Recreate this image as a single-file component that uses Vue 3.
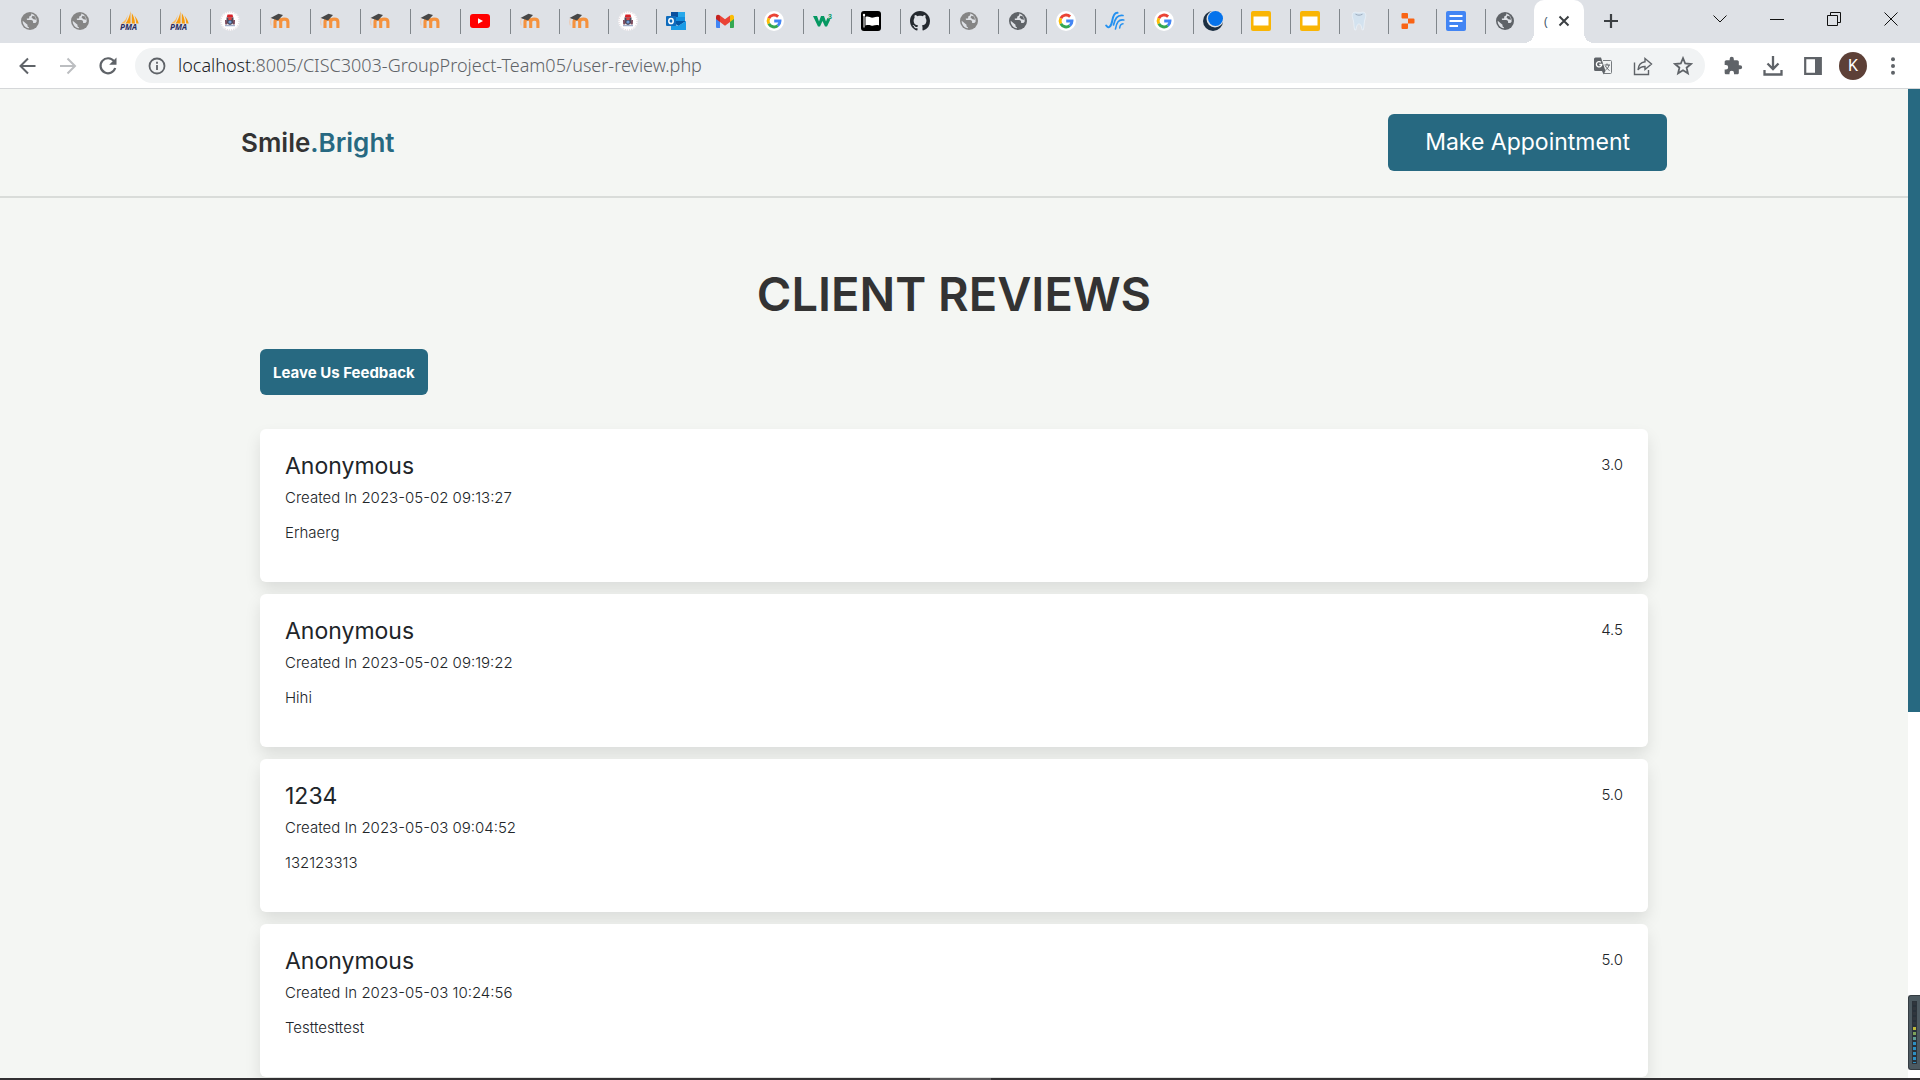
<script setup>
const firstTabs = ['globe', 'globe', 'pma', 'pma', 'crest', 'moodle', 'moodle', 'moodle', 'moodle', 'youtube']
const secondTabs = [
  'moodle', 'moodle', 'crest', 'outlook', 'gmail', 'google', 'w3', 'flag', 'github', 'globe',
  'globe-dark', 'google', 'waves', 'google', 'moon', 'slides', 'slides', 'tooth', 'replit', 'docs'
]
const reviews = [
  { name: 'Anonymous', created: '2023-05-02 09:13:27', text: 'Erhaerg', score: '3.0' },
  { name: 'Anonymous', created: '2023-05-02 09:19:22', text: 'Hihi', score: '4.5' },
  { name: '1234', created: '2023-05-03 09:04:52', text: '132123313', score: '5.0' },
  { name: 'Anonymous', created: '2023-05-03 10:24:56', text: 'Testtesttest', score: '5.0' }
]
</script>

<template>
  <div class="browser">
    <svg class="sprite" aria-hidden="true">
      <defs>
        <symbol id="i-globe" viewBox="0 0 20 20">
          <circle cx="10" cy="10" r="9" fill="currentColor" />
          <path fill="#dee1e6" d="M11 2.6c.6.9.2 2-.8 2.3-.9.3-1.3.8-1 1.6.2.7-.3 1.1-1.200 1.100H6.900c-.4.8.100 1.500 1 1.500h3.300c1.100 0 1.900.8 1.900 1.900v1.100h1.400c1 0 1.500-.5 2.100-1.300A7.300 7.300 0 0 0 11 2.600z" />
          <path fill="#dee1e6" d="M2.700 9.700l4.800 4v1.100c0 .9.600 1.300 1.400 1.400v1c-3.700-.5-6.400-3.800-6.200-7.500z" />
          <path fill="currentColor" d="M12.400 4.800l2.700.8 1 3.200-2.600-.6-2-1.600z" />
        </symbol>
        <symbol id="i-pma" viewBox="0 0 20 20">
          <path fill="#f89c0e" d="M10.500 0v12.500H5.500C8 9 9.800 5 10.500 0zM11.800 2c1.800 3 3 6.500 3.200 10.500h-3.200zM14.500 4.500c2 2.500 3.500 5 4.200 8h-2.500c-.1-3-.8-5.500-1.700-8z" />
          <path fill="#f9bd62" d="M7.500 3.500c-.4 3.700-2.500 6.500-6.300 9h3.300c2-2.500 3-5.500 3-9z" />
          <text x="0" y="19" class="pma-text">PMA</text>
        </symbol>
        <symbol id="i-crest" viewBox="0 0 20 20">
          <circle cx="10" cy="10" r="9.800" fill="#fff" />
          <circle cx="10" cy="10" r="9" fill="none" stroke="#d2c3cb" stroke-width=".9" stroke-dasharray="1 1" />
          <path fill="#d8232a" d="M7.500 3.500h5l.8 3H6.700z" />
          <path fill="#4b4a5e" d="M6.500 6.500h7V11c0 1.500-1.500 2.200-3.500 3-2-.8-3.500-1.500-3.500-3z" />
          <path fill="#e0423f" d="M8 6.500h4l-.5 2.500h-3z" />
          <path fill="#7c4a5c" d="M5 9h1.700l.6 4.500H5.200zM13.300 9H15l-.2 4.500h-2.100z" />
          <circle cx="10" cy="11" r="1.600" fill="#6f9bd6" />
          <path stroke="#7d8fb5" stroke-width=".9" d="M5 14.700h10" />
        </symbol>
        <symbol id="i-moodle" viewBox="0 0 20 20">
          <path d="M5 17v-6c0-3.800 5.700-3.800 5.700 0v6m0-6c0-3.800 7.200-3.800 7.200 0v6" fill="none" stroke="#f5923e" stroke-width="3.100" />
          <path fill="#474747" d="M.5 7l8-4.300 4.500 1.300-5 5.500-3-1z" />
          <path d="M1.500 7.300c-1.300 3-.8 5-.3 7" fill="none" stroke="#f3c29f" stroke-width=".8" />
        </symbol>
        <symbol id="i-youtube" viewBox="0 0 20 20">
          <rect x="0" y="3" width="20" height="14" rx="3" fill="#f00" />
          <path fill="#fff" d="M8 7.200v5.600l5-2.800z" />
        </symbol>
        <symbol id="i-outlook" viewBox="0 0 20 20">
          <path fill="#1490df" d="M5 1h14v10H5z" />
          <path fill="#0a4f9e" d="M5 1h7v5H5z" />
          <path fill="#28a8ea" d="M12 1h7v5h-7z" />
          <path fill="#0358a7" d="M5 10h15l-7.500 5z" />
          <path fill="#1a9be6" d="M5 19h15v-9l-8 5-7-3z" />
          <rect x="0" y="5" width="10" height="10" rx="1" fill="#0f6cbd" />
          <ellipse cx="5" cy="10" rx="2.200" ry="2.600" fill="none" stroke="#fff" stroke-width="1.500" />
        </symbol>
        <symbol id="i-gmail" viewBox="0 0 20 20">
          <path fill="#4285f4" d="M1 6l4 3v8H2a1 1 0 0 1-1-1z" />
          <path fill="#34a853" d="M15 9l4-3v10a1 1 0 0 1-1 1h-3z" />
          <path fill="#fbbc04" d="M15 4.500c2-1.600 4-.5 4 1.500v2l-4 3z" />
          <path fill="#c5221f" d="M1 6c0-2 2-3 4-1.500V11L1 8z" />
          <path fill="#ea4335" d="M5 4.500l5 3.800 5-3.800V11l-5 3.800L5 11z" />
        </symbol>
        <symbol id="i-google" viewBox="0 0 20 20">
          <circle cx="10" cy="10" r="10" fill="#fff" />
          <g fill="none" stroke-width="2.900">
            <path stroke="#ea4335" d="M4.800 7.200a6 6 0 0 1 9.300-1.600" />
            <path stroke="#fbbc05" d="M4.800 12.800a6 6 0 0 1 0-5.600" />
            <path stroke="#34a853" d="M4.800 12.800a6 6 0 0 0 9 1.800" />
            <path stroke="#4285f4" d="M10.200 10H16a6 6 0 0 1-2.200 4.600" />
          </g>
        </symbol>
        <symbol id="i-w3" viewBox="0 0 20 20">
          <path fill="#059862" d="M0 5h4l2 5.500L8 5h3l2 5.500L14.300 7l3 1.500-3.300 7h-2L9.500 10 7 15.500H5z" />
          <text x="15" y="8" class="w3-text">3</text>
        </symbol>
        <symbol id="i-flag" viewBox="0 0 20 20">
          <rect width="20" height="20" rx="3" fill="#000" />
          <circle cx="3" cy="4" r="1.200" fill="#fff" />
          <path stroke="#fff" d="M3 4v12.500" />
          <path fill="#fff" d="M4.500 6c3-1.500 5 1.300 8 .5 2-.6 3.500-1 5.500-.5v8.500c-3-1.200-5 .8-8 0-2-.6-3.500-.6-5.500 0z" />
        </symbol>
        <symbol id="i-github" viewBox="0 0 16 16">
          <path fill="#24292f" d="M8 0C3.580 0 0 3.580 0 8c0 3.540 2.290 6.530 5.470 7.590.4.070.55-.17.55-.38 0-.19-.01-.82-.01-1.490-2.010.37-2.530-.49-2.690-.94-.09-.23-.48-.94-.82-1.130-.28-.15-.68-.52-.01-.53.63-.01 1.080.58 1.230.82.720 1.210 1.870.87 2.330.66.070-.52.280-.87.510-1.070-1.780-.2-3.640-.89-3.640-3.950 0-.87.310-1.590.82-2.150-.08-.2-.36-1.020.08-2.120 0 0 .67-.21 2.200.82.640-.18 1.320-.27 2-.27s1.360.09 2 .27c1.530-1.040 2.200-.82 2.200-.82.440 1.100.16 1.920.08 2.120.510.560.82 1.270.82 2.150 0 3.070-1.870 3.750-3.650 3.950.290.250.540.730.540 1.480 0 1.070-.01 1.930-.01 2.200 0 .210.150.460.550.380A8.010 8.010 0 0 0 16 8c0-4.420-3.580-8-8-8z" />
        </symbol>
        <symbol id="i-waves" viewBox="0 0 20 20">
          <g fill="none" stroke="#2491f0" stroke-linecap="round">
            <path stroke-width="2" d="M1.200 14.500c2.300 3.500 4.800 1.500 6-4.500C8 5.500 9 1.500 12.500 1.800" />
            <path stroke-width="1.700" d="M8.500 14c1.500-6 3.500-10.500 9.500-9.500" />
            <path stroke-width="1.600" d="M10.500 18c1-6.500 3-10 8.300-9" />
            <path stroke-width="1.500" d="M14.700 17c.2-2.500 1.300-4 3.300-4.200" />
          </g>
        </symbol>
        <symbol id="i-moon" viewBox="0 0 20 20">
          <circle cx="10" cy="10" r="10" fill="#1c2f42" />
          <circle cx="12" cy="8" r="8.500" fill="#dee1e6" />
          <circle cx="12.500" cy="7.500" r="7.500" fill="#0573ec" />
        </symbol>
        <symbol id="i-slides" viewBox="0 0 20 20">
          <rect width="20" height="20" rx="2" fill="#f9b505" />
          <path fill="#fff" d="M2.500 5.500h15v9h-15z" />
        </symbol>
        <symbol id="i-tooth" viewBox="0 0 20 20">
          <path fill="#d3e2ef" stroke="#eef4f9" stroke-width=".7" d="M4.500 1.500c2-1 3.500.3 5.500.3s3.500-1.300 5.500-.3c2.500 2 .6 6 0 8.500-.5 3-.3 6-1.300 9h-1c-.7-2.500-1-6-3.200-6s-2.500 3.500-3.200 6h-1c-1-3-.8-6-1.300-9-.6-2.500-2.500-6.500 0-8.500z" />
          <path fill="none" stroke="#9aaabd" d="M6.500 3.200c2.300 1.300 4.700 1.300 7 0" />
        </symbol>
        <symbol id="i-replit" viewBox="0 0 20 20">
          <path fill="#f96314" d="M4.500 2H9a1 1 0 0 1 1 1v4.500H4.500a1 1 0 0 1-1-1V3a1 1 0 0 1 1-1zM10 7.500h5.500a1 1 0 0 1 1 1v3a1 1 0 0 1-1 1H10zM4.500 12.500H10V17a1 1 0 0 1-1 1H4.500a1 1 0 0 1-1-1v-3.500a1 1 0 0 1 1-1z" />
        </symbol>
        <symbol id="i-docs" viewBox="0 0 20 20">
          <rect width="20" height="20" rx="2" fill="#4285f4" />
          <path stroke="#fff" stroke-width="2" d="M3.500 5h13M3.500 10h13M3.500 15H12" />
        </symbol>
      </defs>
    </svg>

    <header class="tabstrip">
      <nav class="tabs first" aria-label="Tabs">
        <button v-for="(icon, i) in firstTabs" :key="i" class="tab" :aria-label="icon">
          <svg class="favicon"><use :href="'#i-' + icon" /></svg>
        </button>
      </nav>
      <nav class="tabs second" aria-label="More tabs">
        <button v-for="(icon, i) in secondTabs" :key="i" class="tab" :aria-label="icon">
          <svg class="favicon" :class="{ dark: icon === 'globe-dark' }"><use :href="'#i-' + icon.replace('-dark', '')" /></svg>
        </button>
      </nav>
      <button class="tab last" aria-label="globe">
        <svg class="favicon dark"><use href="#i-globe" /></svg>
      </button>
      <div class="active-tab">
        <span class="active-title">(</span>
        <button class="close-tab" aria-label="Close tab">
          <svg width="12" height="12" viewBox="0 0 12 12"><path d="M1.500 1.500l9 9m0-9l-9 9" stroke="#3c4043" stroke-width="2" /></svg>
        </button>
      </div>
      <button class="new-tab" aria-label="New tab">
        <svg width="16" height="16" viewBox="0 0 16 16"><path d="M8 1v14M1 8h14" stroke="#3c4043" stroke-width="2.200" /></svg>
      </button>
      <div class="window-controls">
        <button aria-label="Search tabs"><svg width="16" height="16" viewBox="0 0 16 16"><path d="M1.500 4.500L8 11l6.500-6.500" /></svg></button>
        <button aria-label="Minimise"><svg width="14" height="14" viewBox="0 0 14 14"><path d="M0 7.500h14" /></svg></button>
        <button aria-label="Restore"><svg width="14" height="14" viewBox="0 0 14 14"><path d="M.5 3.500h10v10H.500zM3.500 3V.500h10v10H11" /></svg></button>
        <button aria-label="Close"><svg width="14" height="14" viewBox="0 0 14 14"><path d="M.5.500l13 13m0-13l-13 13" /></svg></button>
      </div>
    </header>

    <div class="toolbar">
      <button class="tool" aria-label="Back">
        <svg width="20" height="20" viewBox="0 0 20 20"><path d="M17.500 10H3m7-7.500L2.500 10l7.500 7.500" fill="none" stroke="#5f6368" stroke-width="2" /></svg>
      </button>
      <button class="tool" aria-label="Forward">
        <svg width="20" height="20" viewBox="0 0 20 20"><path d="M2 10h14.500m-7-7.500L17 10l-7.500 7.500" fill="none" stroke="#bcbec1" stroke-width="2" /></svg>
      </button>
      <button class="tool" aria-label="Reload">
        <svg width="20" height="20" viewBox="0 0 20 20"><path d="M16 5.200A7.500 7.500 0 1 0 17.200 12" fill="none" stroke="#5f6368" stroke-width="2.200" /><path d="M18.500 1.500v7.300h-7.300z" fill="#5f6368" /></svg>
      </button>
      <div class="omnibox">
        <svg class="info" width="18" height="18" viewBox="0 0 18 18"><circle cx="9" cy="9" r="7.500" fill="none" stroke="#5f6368" stroke-width="1.800" /><path d="M9 8v5M9 4.700v2" stroke="#5f6368" stroke-width="1.800" /></svg>
        <a class="url" href="#"><span class="host">localhost</span>:8005/CISC3003-GroupProject-Team05/user-review.php</a>
        <button class="tool" aria-label="Translate">
          <svg width="20" height="20" viewBox="0 0 20 20">
            <path d="M10 4.500h7.500a1 1 0 0 1 1 1v11a1 1 0 0 1-1 1H11" fill="#f1f3f4" stroke="#777b7f" />
            <path d="M2.500 1.500H8L12.500 15h-10a1.500 1.500 0 0 1-1.500-1.500V3a1.500 1.500 0 0 1 1.500-1.500z" fill="#5f6368" />
            <path d="M9 15h3.500l-2 3.500z" fill="#5f6368" />
            <path d="M8 6.300a2.700 2.700 0 1 0 .8 2.200H6.300" fill="none" stroke="#fff" stroke-width="1.300" />
            <path d="M11.500 9h5.500M14 7.500V9m2 0c-.5 2.500-2 4-3.500 5m0-4c1 2 2 3 4 4.500" fill="none" stroke="#5f6368" />
          </svg>
        </button>
        <button class="tool" aria-label="Share">
          <svg width="20" height="20" viewBox="0 0 20 20"><path d="M1.500 6.500v12h14V14" fill="none" stroke="#5f6368" stroke-width="1.400" /><path d="M12 2.500l6.500 5.500-6.500 5.500v-3c-3.500 0-5.500 1-7 3.500.3-4.500 2.500-7.500 7-8.200z" fill="none" stroke="#5f6368" stroke-width="1.400" /></svg>
        </button>
        <button class="tool" aria-label="Bookmark">
          <svg width="20" height="20" viewBox="0 0 20 20"><path d="M10 2.200l2.200 5.300 5.700.5-4.300 3.700 1.300 5.600L10 14.300l-4.900 3 1.300-5.600L2.100 8l5.700-.5z" fill="none" stroke="#5f6368" stroke-width="1.800" /></svg>
        </button>
      </div>
      <button class="tool" aria-label="Extensions">
        <svg width="20" height="20" viewBox="0 0 24 24"><path fill="#5f6368" d="M20.500 11H19V7c0-1.100-.9-2-2-2h-4V3.500a2.500 2.500 0 0 0-5 0V5H4c-1.100 0-2 .9-2 2v3.800h1.500a2.700 2.700 0 0 1 0 5.400H2V20c0 1.100.9 2 2 2h3.800v-1.500a2.700 2.700 0 0 1 5.400 0V22H17c1.100 0 2-.9 2-2v-4h1.500a2.500 2.500 0 0 0 0-5z" /></svg>
      </button>
      <button class="tool" aria-label="Downloads">
        <svg width="20" height="20" viewBox="0 0 20 20"><path d="M10 0v13M4.500 7.500L10 13l5.500-5.500M1.500 14v4.500h17V14" fill="none" stroke="#5f6368" stroke-width="2.300" /></svg>
      </button>
      <button class="tool" aria-label="Side panel">
        <svg width="18" height="18" viewBox="0 0 18 18"><path d="M1.200 1.200h15.600v15.600H1.200z" fill="none" stroke="#5f6368" stroke-width="2.200" /><path d="M11 1h6v16h-6z" fill="#5f6368" /></svg>
      </button>
      <button class="tool" aria-label="Profile"><span class="avatar">K</span></button>
      <button class="tool" aria-label="Menu">
        <svg width="4" height="18" viewBox="0 0 4 18"><g fill="#5f6368"><circle cx="2" cy="2.200" r="2" /><circle cx="2" cy="9" r="2" /><circle cx="2" cy="15.800" r="2" /></g></svg>
      </button>
    </div>

    <div class="viewport">
      <main class="page">
        <header class="site-header">
          <div class="site-inner">
            <a class="logo" href="#">Smile<span>.Bright</span></a>
            <a class="appointment" href="#">Make Appointment</a>
          </div>
        </header>
        <section class="reviews">
          <h1>CLIENT REVIEWS</h1>
          <button class="feedback">Leave Us Feedback</button>
          <article v-for="(review, i) in reviews" :key="i" class="card">
            <div class="card-body">
              <h2>{{ review.name }}</h2>
              <p class="created">Created In {{ review.created }}</p>
              <p>{{ review.text }}</p>
            </div>
            <span class="score">{{ review.score }}</span>
          </article>
        </section>
      </main>
      <div class="scrollbar"><div class="thumb"></div></div>
      <div class="meter"><div class="meter-track"></div></div>
    </div>
    <footer class="taskbar"><div class="taskbar-active"></div></footer>
  </div>
</template>

<style>
body {
  margin: 0;
}
</style>

<style scoped>
.browser {
  display: flex;
  flex-direction: column;
  height: 100vh;
  overflow: hidden;
  background: #fff;
  font-family: Inter, sans-serif;
}
.sprite {
  position: absolute;
  width: 0;
  height: 0;
}
.pma-text {
  font: italic 700 8px "Open Sans", sans-serif;
  fill: #2b2c5e;
}
.w3-text {
  font: 700 7px "Liberation Sans", sans-serif;
  fill: #059862;
}
button {
  border: 0;
  padding: 0;
  background: none;
  font-family: inherit;
  color: inherit;
}
a {
  text-decoration: none;
}
.tabstrip {
  display: flex;
  flex: none;
  height: 43px;
  padding-left: 11px;
  background: #dee1e6;
}
.tabs {
  display: flex;
}
.first {
  flex: 0 0 500px;
}
.second {
  flex: 0 0 975px;
}
.tab {
  display: flex;
  flex: 1;
  align-items: flex-start;
  box-sizing: border-box;
  height: 25px;
  margin-top: 9px;
  padding: 2px 0 0 9px;
  border-right: 1px solid #80868b;
}
.last {
  flex: 0 0 48px;
  border: 0;
}
.favicon {
  width: 20px;
  height: 20px;
  color: #858585;
}
.dark {
  color: #5f6368;
}
.active-tab {
  position: relative;
  display: flex;
  flex: 0 0 50px;
  align-items: center;
  justify-content: space-between;
  box-sizing: border-box;
  padding: 0 14px 1px 10px;
  border-radius: 10px 10px 0 0;
  background: #fff;
}
.active-tab::before,
.active-tab::after {
  content: "";
  position: absolute;
  bottom: 0;
  width: 10px;
  height: 10px;
}
.active-tab::before {
  right: 100%;
  background: radial-gradient(circle at 0 0, transparent 10px, #fff 10px);
}
.active-tab::after {
  left: 100%;
  background: radial-gradient(circle at 100% 0, transparent 10px, #fff 10px);
}
.active-title {
  color: #45586b;
  font: 13px "Open Sans", sans-serif;
}
.close-tab,
.new-tab {
  display: flex;
  align-items: center;
  justify-content: center;
}
.new-tab {
  width: 54px;
  height: 42px;
}
.window-controls {
  display: flex;
  height: 37px;
  margin-left: auto;
}
.window-controls button {
  display: flex;
  width: 57px;
  padding-right: 2px;
  align-items: center;
  justify-content: center;
}
.window-controls path {
  fill: none;
  stroke: #111;
}
.toolbar {
  display: flex;
  flex: none;
  align-items: center;
  height: 45px;
  padding: 0 7px 0 8px;
  border-bottom: 1px solid #d5d7d9;
  background: #fff;
}
.tool {
  display: flex;
  flex: none;
  width: 40px;
  height: 35px;
  align-items: center;
  justify-content: center;
}
.omnibox {
  display: flex;
  flex: 1;
  align-items: center;
  height: 35px;
  margin: 0 8px 0 7px;
  padding: 0 2px 0 13px;
  border-radius: 18px;
  background: #f1f3f4;
}
.info {
  flex: none;
  margin-right: 12px;
}
.url {
  flex: 1;
  color: #5f6368;
  font: 300 18px/33px "Noto Sans", sans-serif;
}
.host {
  color: #202124;
}
.avatar {
  width: 28px;
  border-radius: 50%;
  background: #5d4037;
  color: #fff;
  font: 16px/28px Roboto, sans-serif;
  text-align: center;
}
.viewport {
  position: relative;
  display: flex;
  flex: 1;
  min-height: 0;
}
.page {
  flex: 1;
  overflow: hidden;
  background: #f4f6f3;
}
.site-header {
  padding: 25px 0;
  border-bottom: 2px solid #d9dcd9;
}
.site-inner {
  display: flex;
  align-items: center;
  justify-content: space-between;
  max-width: 1426px;
  margin: 0 auto;
}
.logo {
  color: #333;
  font-size: 26px;
  font-weight: 600;
}
.logo span {
  color: #276981;
}
.appointment {
  padding: 0 37px;
  border-radius: 6px;
  background: #276981;
  color: #fff;
  font-size: 23px;
  line-height: 57px;
}
.reviews {
  max-width: 1388px;
  margin: 0 auto;
  padding-top: 64px;
}
h1 {
  margin: 0 0 23px;
  color: #333;
  font-size: 47px;
  font-weight: 600;
  line-height: 64px;
  text-align: center;
}
.feedback {
  display: block;
  height: 46px;
  margin-bottom: 34px;
  padding: 0 13px;
  border-radius: 6px;
  background: #276981;
  color: #fff;
  font-size: 15px;
  font-weight: 700;
}
.card {
  display: flex;
  justify-content: space-between;
  box-sizing: border-box;
  min-height: 153px;
  margin-bottom: 12px;
  padding: 22px 25px;
  border-radius: 6px;
  background: #fff;
  box-shadow: 0 8px 16px rgba(0, 0, 0, 0.1);
  color: #212529;
}
h2 {
  margin: 0;
  font-size: 23px;
  font-weight: 400;
  line-height: 30px;
}
p,
.score {
  margin: 0;
  font-size: 15px;
  font-weight: 300;
  line-height: 27px;
}
.created {
  margin: 3px 0 8px;
}
.scrollbar {
  flex: 0 0 12px;
  background: #fff;
}
.thumb {
  height: 63%;
  background: #276981;
}
.meter {
  position: absolute;
  right: 0;
  bottom: 8px;
  box-sizing: border-box;
  width: 12px;
  height: 75px;
  padding: 5px 3px;
  border: 1px solid #343c42;
  border-right: 0;
  border-radius: 3px 0 0 3px;
  background: #4c5960;
}
.meter-track {
  width: 3px;
  height: 61px;
  border: 1px solid #2c333a;
  background:
    repeating-linear-gradient(transparent 0 3px, #27313a 3px 5px),
    linear-gradient(#30363d 24px, #bdb83a 24px 28px, #7da35a 28px 34px, #5f9c95 34px 39px, #2d8fc2 39px);
}
.taskbar {
  display: flex;
  flex: none;
  justify-content: center;
  height: 2px;
  background: #323032;
}
.taskbar-active {
  width: 61px;
  background: #5c5a5c;
}
</style>
